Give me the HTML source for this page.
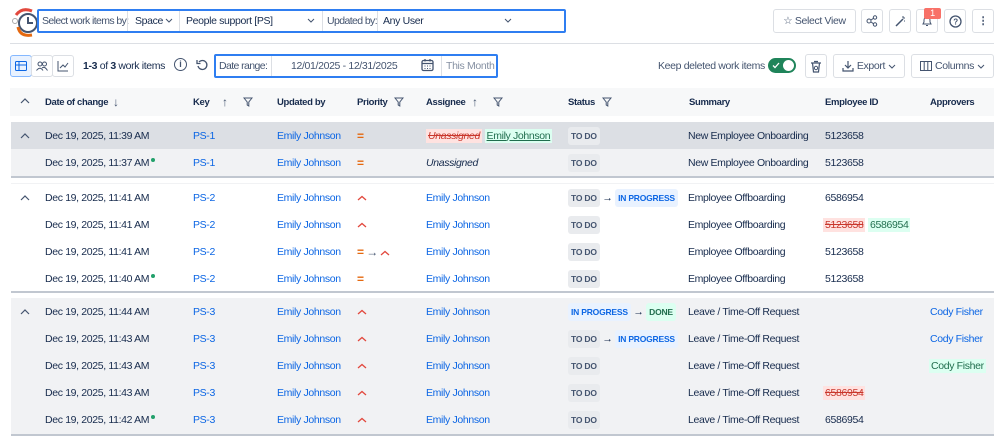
<!DOCTYPE html>
<html><head><meta charset="utf-8"><style>
*{box-sizing:border-box;margin:0;padding:0}
body{width:999px;height:437px;overflow:hidden;background:#fff;font-family:"Liberation Sans",sans-serif;font-size:10.5px;letter-spacing:-0.35px;color:#172b4d;position:relative}
.a{position:absolute;white-space:nowrap}
.tight{letter-spacing:-0.6px}
.btn{position:absolute;border:1px solid #dcdfe4;border-radius:3px;background:#fff;display:flex;align-items:center;justify-content:center;color:#44546f}
.lnk{color:#0c66e4}
.grp{position:absolute;left:11px;width:983px;border-bottom:2px solid #c1c7d0}
.row{position:absolute;left:0;width:100%;height:27px}
.t{position:absolute;top:50%;transform:translateY(-50%);white-space:nowrap}
.lz,.lb,.lg{display:inline-block;font-weight:bold;font-size:8.5px;padding:4px 3px;border-radius:3px;letter-spacing:-0.2px}
.lz{background:#e9ebee;color:#44546f}
.lb{background:#e9f2ff;color:#0c66e4}
.lg{background:#dcfff1;color:#216e4e}
.hd{font-weight:bold;font-size:9.5px;color:#172b4d}
.del{background:#ffe2e0;color:#c9372c;text-decoration:line-through;padding:1px 2px}
.add{background:#dcfff1;color:#216e4e;padding:1px 2px}
.dot{display:inline-block;width:4px;height:4px;border-radius:50%;background:#22a06b;vertical-align:top;margin-left:2px;margin-top:1px}
.eq{color:#e56910;font-weight:bold;font-size:12px}
svg{vertical-align:middle}
</style></head><body>

<svg class="a" style="left:8px;top:5px" width="34" height="34" viewBox="0 0 34 34">
<path d="M8 10 Q14 2 24 6" stroke="#e2483d" stroke-width="3" fill="none"/>
<circle cx="20" cy="18" r="9" fill="none" stroke="#44546f" stroke-width="2"/>
<path d="M20 12 V18 H25" stroke="#44546f" stroke-width="2" fill="none"/>
<path d="M10 22 Q12 32 24 30" stroke="#e56910" stroke-width="3" fill="none"/>
<circle cx="7" cy="16" r="2.5" fill="#fff" stroke="#aaa"/>
</svg>

<div class="a" style="left:37px;top:9px;width:529px;height:24px;border:2px solid #2f7ef1;border-radius:2px"></div>
<div class="a tight" style="left:42px;top:15px;color:#44546f">Select work items by:</div>
<div class="a" style="left:127px;top:11px;width:1px;height:20px;background:#dcdfe4"></div>
<div class="a" style="left:135px;top:15px">Space</div>
<svg class="a" style="left:165px;top:18px" width="8" height="5"><path d="M1 1 L4 4 L7 1" stroke="#44546f" fill="none"/></svg>
<div class="a" style="left:179px;top:11px;width:1px;height:20px;background:#dcdfe4"></div>
<div class="a" style="left:186px;top:15px">People support [PS]</div>
<svg class="a" style="left:307px;top:18px" width="8" height="5"><path d="M1 1 L4 4 L7 1" stroke="#44546f" fill="none"/></svg>
<div class="a" style="left:322px;top:11px;width:1px;height:20px;background:#dcdfe4"></div>
<div class="a tight" style="left:327px;top:15px;color:#44546f">Updated by:</div>
<div class="a" style="left:377px;top:11px;width:1px;height:20px;background:#dcdfe4"></div>
<div class="a" style="left:383px;top:15px">Any User</div>
<svg class="a" style="left:504px;top:18px" width="8" height="5"><path d="M1 1 L4 4 L7 1" stroke="#44546f" fill="none"/></svg>

<div class="btn" style="left:773px;top:9px;width:83px;height:24px">☆&nbsp;Select View</div>
<div class="btn" style="left:861px;top:9px;width:22px;height:24px"><svg width="12" height="12"><circle cx="3" cy="6" r="2" fill="none" stroke="#44546f"/><circle cx="9" cy="2.5" r="1.7" fill="none" stroke="#44546f"/><circle cx="9" cy="9.5" r="1.7" fill="none" stroke="#44546f"/><path d="M5 5 L7.5 3.3 M5 7 L7.5 8.7" stroke="#44546f"/></svg></div>
<div class="btn" style="left:889px;top:9px;width:22px;height:24px"><svg width="12" height="12"><path d="M2 11 L9 4" stroke="#44546f" stroke-width="1.5"/><path d="M9 1 V3 M11 3 H9 M11 6 H10" stroke="#44546f"/></svg></div>
<div class="btn" style="left:916px;top:9px;width:22px;height:24px"><svg width="12" height="12"><path d="M2 9 H10 L9 7 V5 A3 3 0 0 0 3 5 V7 Z M5 10.5 H7" stroke="#44546f" fill="none"/></svg></div>
<div class="a" style="left:924px;top:8px;width:17px;height:11px;background:#f87168;color:#fff;font-size:9px;text-align:center;line-height:11px;border-radius:2px">1</div>
<div class="btn" style="left:944px;top:9px;width:22px;height:24px"><svg width="13" height="13"><circle cx="6.5" cy="6.5" r="5.5" fill="none" stroke="#44546f" stroke-width="1.3"/><text x="6.5" y="9.5" font-size="8" text-anchor="middle" fill="#44546f" font-family="Liberation Sans" font-weight="bold">?</text></svg></div>
<div class="btn" style="left:972px;top:9px;width:22px;height:24px;font-weight:bold">⋮</div>

<div class="a" style="left:10px;top:43px;width:984px;height:1px;background:#dcdfe4"></div>

<div class="btn" style="left:10px;top:55px;width:22px;height:22px;background:#e9f2ff;border-color:#85b8ff"><svg width="12" height="10"><rect x="0.5" y="0.5" width="11" height="9" rx="1" fill="none" stroke="#0c66e4"/><path d="M0.5 4 H11.5 M4 1 V9" stroke="#0c66e4"/></svg></div>
<div class="btn" style="left:31px;top:55px;width:22px;height:22px"><svg width="12" height="10"><circle cx="4" cy="3" r="2" fill="none" stroke="#44546f"/><circle cx="8.5" cy="3" r="2" fill="none" stroke="#44546f"/><path d="M0.5 9.5 Q4 5 7 9.5 M6 7 Q9 5 11.5 9.5" fill="none" stroke="#44546f"/></svg></div>
<div class="btn" style="left:52px;top:55px;width:22px;height:22px"><svg width="12" height="11"><path d="M1 0 V10 H11 M3 7 L6 4 L8 6 L11 2" fill="none" stroke="#44546f"/></svg></div>
<div class="a" style="left:83px;top:60px"><b>1-3</b> of <b>3</b> work items</div>
<div class="a" style="left:174px;top:58px;width:13px;height:13px;border:1.3px solid #44546f;border-radius:50%;font-size:9px;text-align:center;line-height:10px;font-weight:bold;color:#44546f;letter-spacing:0">i</div>
<svg class="a" style="left:196px;top:59px" width="12" height="12"><path d="M3 3 A4.5 4.5 0 1 1 2 7" fill="none" stroke="#44546f" stroke-width="1.3"/><path d="M1 1 V4.5 H4.5" fill="none" stroke="#44546f" stroke-width="1.3"/></svg>
<div class="a" style="left:214px;top:54px;width:284px;height:24px;border:2px solid #2f7ef1;border-radius:2px"></div>
<div class="a tight" style="left:219px;top:60px;color:#44546f">Date range:</div>
<div class="a" style="left:271px;top:56px;width:1px;height:20px;background:#dcdfe4"></div>
<div class="a" style="left:291px;top:60px;color:#44546f">12/01/2025 - 12/31/2025</div>
<svg class="a" style="left:421px;top:58px" width="13" height="14"><rect x="1" y="2.5" width="11" height="10" rx="1.5" fill="none" stroke="#44546f" stroke-width="1.3"/><path d="M1 5.5 H12 M4 1 V3.5 M9 1 V3.5" stroke="#44546f" stroke-width="1.3"/><path d="M3.5 8 H4.5 M6 8 H7 M8.5 8 H9.5 M3.5 10.5 H4.5 M6 10.5 H7 M8.5 10.5 H9.5" stroke="#44546f"/></svg>
<div class="a" style="left:441px;top:56px;width:1px;height:20px;background:#dcdfe4"></div>
<div class="a" style="left:446px;top:60px;color:#8590a2">This Month</div>

<div class="a" style="left:658px;top:60px;color:#44546f">Keep deleted work items</div>
<div class="a" style="left:768px;top:58px;width:28px;height:15px;background:#1f845a;border-radius:8px"><svg style="position:absolute;left:4px;top:4px" width="8" height="7"><path d="M1 3.5 L3 5.5 L7 1" stroke="#fff" fill="none" stroke-width="1.3"/></svg><span style="position:absolute;right:2px;top:2px;width:11px;height:11px;background:#fff;border-radius:50%"></span></div>
<div class="btn" style="left:805px;top:54px;width:22px;height:24px"><svg width="12" height="13"><path d="M1 3 H11 M4 1.5 H8 M2.5 3 L3.5 12 H8.5 L9.5 3" fill="none" stroke="#44546f" stroke-width="1.2"/><circle cx="6" cy="8" r="1.7" fill="none" stroke="#44546f"/></svg></div>
<div class="btn" style="left:833px;top:54px;width:72px;height:24px"><svg width="12" height="12"><path d="M6 1 V8 M3 5 L6 8 L9 5 M1 8 V11 H11 V8" fill="none" stroke="#44546f" stroke-width="1.2"/></svg>&nbsp;Export&nbsp;<svg width="8" height="5"><path d="M1 1 L4 4 L7 1" stroke="#44546f" fill="none"/></svg></div>
<div class="btn" style="left:911px;top:54px;width:83px;height:24px"><svg width="12" height="10"><rect x="0.5" y="0.5" width="11" height="9" fill="none" stroke="#44546f"/><path d="M4.2 1 V9 M7.8 1 V9" stroke="#44546f"/></svg>&nbsp;Columns&nbsp;<svg width="8" height="5"><path d="M1 1 L4 4 L7 1" stroke="#44546f" fill="none"/></svg></div>

<div class="a" style="left:10px;top:88px;width:984px;height:28px;background:#f7f8f9"></div>
<svg class="a" style="left:20px;top:98px" width="10" height="6"><path d="M1 5 L5 1 L9 5" stroke="#44546f" fill="none" stroke-width="1.2"/></svg>
<div class="a hd" style="left:45px;top:97px">Date of change</div>
<div class="a" style="left:113px;top:95px;font-size:12px;color:#44546f">↓</div>
<div class="a hd" style="left:193px;top:97px">Key</div>
<div class="a" style="left:222px;top:95px;font-size:12px;color:#44546f">↑</div>
<div class="a hd" style="left:357px;top:97px">Priority</div>
<div class="a hd" style="left:277px;top:97px">Updated by</div>
<div class="a hd" style="left:426px;top:97px">Assignee</div>
<div class="a" style="left:472px;top:95px;font-size:12px;color:#44546f">↑</div>
<div class="a hd" style="left:568px;top:97px">Status</div>
<div class="a hd" style="left:689px;top:97px">Summary</div>
<div class="a hd" style="left:825px;top:97px">Employee ID</div>
<div class="a hd" style="left:930px;top:97px">Approvers</div>
<svg class="a" style="left:243px;top:97px" width="10" height="10"><path d="M1 1 H9 L5.8 5 V9 L4.2 8 V5 Z" fill="none" stroke="#44546f"/></svg>
<svg class="a" style="left:394px;top:97px" width="10" height="10"><path d="M1 1 H9 L5.8 5 V9 L4.2 8 V5 Z" fill="none" stroke="#44546f"/></svg>
<svg class="a" style="left:493px;top:97px" width="10" height="10"><path d="M1 1 H9 L5.8 5 V9 L4.2 8 V5 Z" fill="none" stroke="#44546f"/></svg>
<svg class="a" style="left:602px;top:97px" width="10" height="10"><path d="M1 1 H9 L5.8 5 V9 L4.2 8 V5 Z" fill="none" stroke="#44546f"/></svg>

<!-- group 1 -->
<div class="grp" style="top:122px;height:56px;background:#f1f2f4">
 <div class="row" style="top:0;background:#dcdfe4">
  <span class="t" style="left:9px"><svg width="10" height="6"><path d="M1 5 L5 1 L9 5" stroke="#44546f" fill="none" stroke-width="1.2"/></svg></span>
  <span class="t" style="left:34px">Dec 19, 2025, 11:39 AM</span>
  <span class="t lnk" style="left:182px">PS-1</span>
  <span class="t lnk" style="left:266px">Emily Johnson</span>
  <span class="t eq" style="left:346px">=</span>
  <span class="t" style="left:415px"><i class="del">Unassigned</i> <span class="add" style="text-decoration:underline">Emily Johnson</span></span>
  <span class="t" style="left:557px"><span class="lz">TO DO</span></span>
  <span class="t" style="left:677px">New Employee Onboarding</span>
  <span class="t" style="left:814px">5123658</span>
 </div>
 <div class="row" style="top:27px">
  <span class="t" style="left:34px">Dec 19, 2025, 11:37 AM<span class="dot"></span></span>
  <span class="t lnk" style="left:182px">PS-1</span>
  <span class="t lnk" style="left:266px">Emily Johnson</span>
  <span class="t eq" style="left:346px">=</span>
  <span class="t" style="left:415px"><i>Unassigned</i></span>
  <span class="t" style="left:557px"><span class="lz">TO DO</span></span>
  <span class="t" style="left:677px">New Employee Onboarding</span>
  <span class="t" style="left:814px">5123658</span>
 </div>
</div>

<!-- group 2 -->
<div class="grp" style="top:183px;height:110px;background:#fff;border-top:1px solid #f1f2f4">
 <div class="row" style="top:0">
  <span class="t" style="left:9px"><svg width="10" height="6"><path d="M1 5 L5 1 L9 5" stroke="#44546f" fill="none" stroke-width="1.2"/></svg></span>
  <span class="t" style="left:34px">Dec 19, 2025, 11:41 AM</span>
  <span class="t lnk" style="left:182px">PS-2</span>
  <span class="t lnk" style="left:266px">Emily Johnson</span>
  <span class="t" style="left:346px"><svg width="10" height="6"><path d="M1 5 L5 1.5 L9 5" stroke="#e2483d" fill="none" stroke-width="1.3"/></svg></span>
  <span class="t lnk" style="left:415px">Emily Johnson</span>
  <span class="t" style="left:557px"><span class="lz">TO DO</span> → <span class="lb">IN PROGRESS</span></span>
  <span class="t" style="left:677px">Employee Offboarding</span>
  <span class="t" style="left:814px">6586954</span>
 </div>
 <div class="row" style="top:27px">
  <span class="t" style="left:34px">Dec 19, 2025, 11:41 AM</span>
  <span class="t lnk" style="left:182px">PS-2</span>
  <span class="t lnk" style="left:266px">Emily Johnson</span>
  <span class="t" style="left:346px"><svg width="10" height="6"><path d="M1 5 L5 1.5 L9 5" stroke="#e2483d" fill="none" stroke-width="1.3"/></svg></span>
  <span class="t lnk" style="left:415px">Emily Johnson</span>
  <span class="t" style="left:557px"><span class="lz">TO DO</span></span>
  <span class="t" style="left:677px">Employee Offboarding</span>
  <span class="t" style="left:812px"><span class="del">5123658</span> <span class="add">6586954</span></span>
 </div>
 <div class="row" style="top:54px">
  <span class="t" style="left:34px">Dec 19, 2025, 11:41 AM</span>
  <span class="t lnk" style="left:182px">PS-2</span>
  <span class="t lnk" style="left:266px">Emily Johnson</span>
  <span class="t" style="left:346px"><span class="eq">=</span> <span style="color:#44546f;font-size:12px">→</span> <svg width="10" height="6"><path d="M1 5 L5 1.5 L9 5" stroke="#e2483d" fill="none" stroke-width="1.3"/></svg></span>
  <span class="t lnk" style="left:415px">Emily Johnson</span>
  <span class="t" style="left:557px"><span class="lz">TO DO</span></span>
  <span class="t" style="left:677px">Employee Offboarding</span>
  <span class="t" style="left:814px">5123658</span>
 </div>
 <div class="row" style="top:81px">
  <span class="t" style="left:34px">Dec 19, 2025, 11:40 AM<span class="dot"></span></span>
  <span class="t lnk" style="left:182px">PS-2</span>
  <span class="t lnk" style="left:266px">Emily Johnson</span>
  <span class="t eq" style="left:346px">=</span>
  <span class="t lnk" style="left:415px">Emily Johnson</span>
  <span class="t" style="left:557px"><span class="lz">TO DO</span></span>
  <span class="t" style="left:677px">Employee Offboarding</span>
  <span class="t" style="left:814px">5123658</span>
 </div>
</div>

<!-- group 3 -->
<div class="grp" style="top:298px;height:138px;background:#f1f2f4">
 <div class="row" style="top:0">
  <span class="t" style="left:9px"><svg width="10" height="6"><path d="M1 5 L5 1 L9 5" stroke="#44546f" fill="none" stroke-width="1.2"/></svg></span>
  <span class="t" style="left:34px">Dec 19, 2025, 11:44 AM</span>
  <span class="t lnk" style="left:182px">PS-3</span>
  <span class="t lnk" style="left:266px">Emily Johnson</span>
  <span class="t" style="left:346px"><svg width="10" height="6"><path d="M1 5 L5 1.5 L9 5" stroke="#e2483d" fill="none" stroke-width="1.3"/></svg></span>
  <span class="t lnk" style="left:415px">Emily Johnson</span>
  <span class="t" style="left:557px"><span class="lb">IN PROGRESS</span> → <span class="lg">DONE</span></span>
  <span class="t" style="left:677px">Leave / Time-Off Request</span>
  <span class="t lnk" style="left:919px">Cody Fisher</span>
 </div>
 <div class="row" style="top:27px">
  <span class="t" style="left:34px">Dec 19, 2025, 11:43 AM</span>
  <span class="t lnk" style="left:182px">PS-3</span>
  <span class="t lnk" style="left:266px">Emily Johnson</span>
  <span class="t" style="left:346px"><svg width="10" height="6"><path d="M1 5 L5 1.5 L9 5" stroke="#e2483d" fill="none" stroke-width="1.3"/></svg></span>
  <span class="t lnk" style="left:415px">Emily Johnson</span>
  <span class="t" style="left:557px"><span class="lz">TO DO</span> → <span class="lb">IN PROGRESS</span></span>
  <span class="t" style="left:677px">Leave / Time-Off Request</span>
  <span class="t lnk" style="left:919px">Cody Fisher</span>
 </div>
 <div class="row" style="top:54px">
  <span class="t" style="left:34px">Dec 19, 2025, 11:43 AM</span>
  <span class="t lnk" style="left:182px">PS-3</span>
  <span class="t lnk" style="left:266px">Emily Johnson</span>
  <span class="t" style="left:346px"><svg width="10" height="6"><path d="M1 5 L5 1.5 L9 5" stroke="#e2483d" fill="none" stroke-width="1.3"/></svg></span>
  <span class="t lnk" style="left:415px">Emily Johnson</span>
  <span class="t" style="left:557px"><span class="lz">TO DO</span></span>
  <span class="t" style="left:677px">Leave / Time-Off Request</span>
  <span class="t add" style="left:918px">Cody Fisher</span>
 </div>
 <div class="row" style="top:81px">
  <span class="t" style="left:34px">Dec 19, 2025, 11:43 AM</span>
  <span class="t lnk" style="left:182px">PS-3</span>
  <span class="t lnk" style="left:266px">Emily Johnson</span>
  <span class="t" style="left:346px"><svg width="10" height="6"><path d="M1 5 L5 1.5 L9 5" stroke="#e2483d" fill="none" stroke-width="1.3"/></svg></span>
  <span class="t lnk" style="left:415px">Emily Johnson</span>
  <span class="t" style="left:557px"><span class="lz">TO DO</span></span>
  <span class="t" style="left:677px">Leave / Time-Off Request</span>
  <span class="t del" style="left:812px">6586954</span>
 </div>
 <div class="row" style="top:108px">
  <span class="t" style="left:34px">Dec 19, 2025, 11:42 AM<span class="dot"></span></span>
  <span class="t lnk" style="left:182px">PS-3</span>
  <span class="t lnk" style="left:266px">Emily Johnson</span>
  <span class="t" style="left:346px"><svg width="10" height="6"><path d="M1 5 L5 1.5 L9 5" stroke="#e2483d" fill="none" stroke-width="1.3"/></svg></span>
  <span class="t lnk" style="left:415px">Emily Johnson</span>
  <span class="t" style="left:557px"><span class="lz">TO DO</span></span>
  <span class="t" style="left:677px">Leave / Time-Off Request</span>
  <span class="t" style="left:814px">6586954</span>
 </div>
</div>
</body></html>
